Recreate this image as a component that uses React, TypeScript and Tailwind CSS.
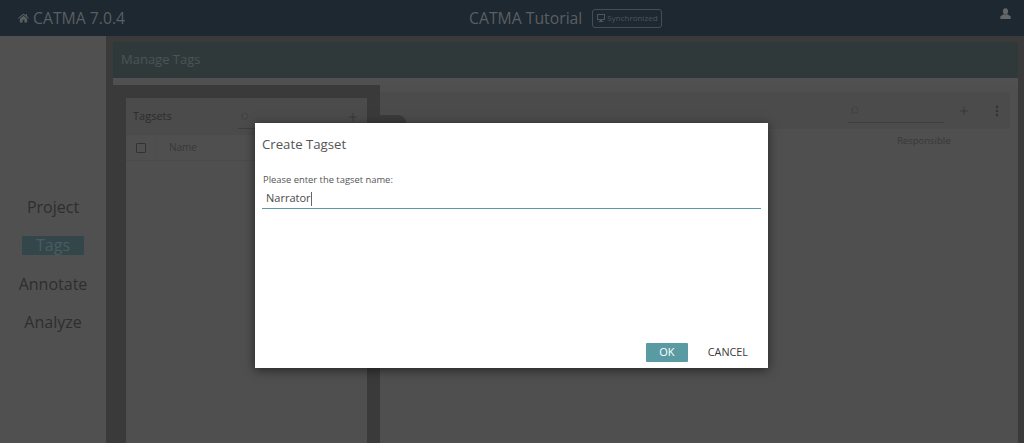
import React from 'react';
import { Plus, Search, EllipsisVertical } from 'lucide-react';

const font = "font-['Open_Sans','Noto_Sans',sans-serif]";

const HomeIcon = () => (
  <svg viewBox="0 0 12 11" className="h-[10px] w-[11px] fill-[#5a5f62]">
    <path d="M6 0.5 L0 5.6 L0.7 6.4 L6 2 L11.3 6.4 L12 5.6 L9.8 3.7 V1 H8.3 V2.4 Z" />
    <path d="M6 3 L2 6.3 V10.5 H5 V7.5 H7 V10.5 H10 V6.3 Z" />
  </svg>
);

const UserIcon = () => (
  <svg viewBox="0 0 12 13" className="h-[12px] w-[11px] fill-[#63676a]">
    <ellipse cx="6" cy="3.6" rx="2.8" ry="3.4" />
    <path d="M4.4 6.6 L0.4 9 V12 H11.6 V9 L7.6 6.6 L6 7.6 Z" />
  </svg>
);

const MonitorIcon = () => (
  <svg viewBox="0 0 10 10" className="h-[10px] w-[10px] fill-[#4f5559]">
    <path d="M1 1 H9 V7 H6 V8 H7.5 V9 H2.5 V8 H4 V7 H1 Z M2 2 V6 H8 V2 Z" fillRule="evenodd" />
  </svg>
);

const NavItem = ({ label, active }: { label: string; active?: boolean }) => (
  <div className="flex h-[38.5px] items-center justify-center">
    <span
      className={
        active
          ? 'bg-[#33474a] px-[13.5px] text-[16px] leading-[19px] text-[#4a5c60]'
          : 'text-[16px] leading-[19px] text-[#2e2e2e]'
      }
    >
      {label}
    </span>
  </div>
);

const SearchBox = ({ width }: { width: string }) => (
  <div className={`flex h-[24px] items-center border-b border-[#3e3e3e] pl-[2px] ${width}`}>
    <Search className="h-[9px] w-[9px] -scale-x-100 text-[#3a3a3a]" strokeWidth={1.5} />
  </div>
);

const App: React.FC = () => {
  return (
    <div className={`relative flex h-[443px] w-[1024px] flex-col overflow-hidden bg-[#3a3a3a] ${font}`}>
      <header className="flex h-[36px] shrink-0 items-center bg-[#1e2830] pl-[18px] pr-[13px]">
        <div className="flex w-[431px] items-center gap-[4px] text-[#5a5f62]">
          <HomeIcon />
          <span className="text-[15.75px] leading-[20px]">CATMA 7.0.4</span>
        </div>
        <span className="ml-[20px] text-[15.75px] leading-[20px] text-[#5a5f62]">CATMA Tutorial</span>
        <div className="ml-[10px] flex h-[19px] items-center gap-[1px] rounded-[3px] border border-[#474e53] px-[3px] text-[#4f5559]">
          <MonitorIcon />
          <span className="text-[8px] leading-[10px]">Synchronized</span>
        </div>
        <div className="mb-[8px] ml-auto flex">
          <UserIcon />
        </div>
      </header>

      <div className="flex min-h-0 flex-1">
        <nav className="flex w-[106px] shrink-0 flex-col bg-[#505050] pt-[152px]">
          <NavItem label="Project" />
          <NavItem label="Tags" active />
          <NavItem label="Annotate" />
          <NavItem label="Analyze" />
        </nav>

        <main className="flex min-w-0 flex-1 flex-col pl-[7px] pr-[6px] pt-[6px]">
          <div className="flex h-[36px] shrink-0 items-center bg-[#30393a] px-[8px] text-[13px] text-[#4a5457]">
            Manage Tags
          </div>
          <div className="h-[7px] shrink-0 bg-[#505050]" />

          <div className="flex min-h-0 flex-1">
            <section className="w-[267px] shrink-0 bg-[#3a3a3a] px-[13px] pt-[13px]">
              <div className="h-full bg-[#4f4f4f]">
                <div className="flex h-[37px] items-center bg-[#4b4b4b] pl-[7px] pr-[8px]">
                  <span className="text-[11px] text-[#2c2c2c]">Tagsets</span>
                  <div className="ml-[66px]">
                    <SearchBox width="w-[100px]" />
                  </div>
                  <Plus className="ml-auto h-[12px] w-[12px] text-[#333333]" strokeWidth={1.5} />
                </div>
                <div className="flex h-[26px] items-center border-b border-[#4a4a4a]">
                  <div className="flex h-full w-[30px] items-center justify-center border-r border-[#4c4c4c]">
                    <div className="h-[10px] w-[10px] rounded-[1px] border border-[#333333]" />
                  </div>
                  <span className="ml-[13px] text-[10px] text-[#383838]">Name</span>
                </div>
              </div>
            </section>

            <section className="min-w-0 flex-1 bg-[#4f4f4f] pr-[8px] pt-[7px]">
              <div className="flex h-[37px] items-center justify-end bg-[#4b4b4b] pr-[6px]">
                <SearchBox width="w-[96px]" />
                <Plus className="ml-[14px] h-[12px] w-[12px] text-[#333333]" strokeWidth={1.5} />
                <EllipsisVertical className="ml-[20px] h-[14px] w-[14px] text-[#333333]" strokeWidth={2.5} />
              </div>
              <div className="mt-[5px] pl-[517px] text-[9.5px] leading-[14px] text-[#383838]">Responsible</div>
            </section>
          </div>
        </main>
      </div>

      <div className="absolute left-[380px] top-[115px] h-[10px] w-[26px] rounded-tr-[8px] bg-[#3a3a3a]" />

      <div className="absolute left-[255px] top-[123px] flex h-[245px] w-[513px] flex-col bg-white px-[7px] pb-[6px] shadow-[0_2px_10px_rgba(0,0,0,0.55)]">
        <h2 className="mt-[11px] text-[13.2px] leading-[20px] text-[#555555]">Create Tagset</h2>
        <label className="ml-px mt-[19px] text-[9.4px] leading-[14px] text-[#555555]">Please enter the tagset name:</label>
        <div className="mt-[1px] flex h-[21px] items-center border-b border-[#5a9ba3] pl-[4px] pt-[1px] text-[11px] text-[#4a4a4a]">
          Narrator<span className="h-[14px] w-px bg-[#666666]" />
        </div>
        <div className="mt-auto flex items-center justify-end">
          <button className="h-[19px] w-[42px] rounded-[1px] bg-[#5a9ba3] text-[11px] text-white">OK</button>
          <button className="ml-[20px] mr-[13px] text-[10.8px] text-[#3a3a3a]">CANCEL</button>
        </div>
      </div>
    </div>
  );
};

export default App;
